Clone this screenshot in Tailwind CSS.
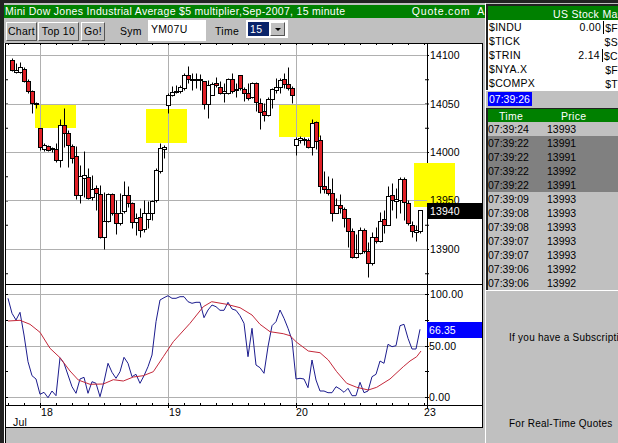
<!DOCTYPE html>
<html lang="en">
<head>
  <meta charset="UTF-8" />
  <title>Mini Dow Jones Chart</title>
  <script src="https://cdn.jsdelivr.net/npm/@tailwindcss/browser@4"></script>
</head>
<body class="w-[618px] h-[443px] overflow-hidden bg-[#c0c0c0] text-black font-['Liberation_Sans',sans-serif] text-[10.5px] leading-none tracking-[0.3px]">
<div class="flex h-[443px] border-t-[3px] border-[#222]">

  <!-- Left: chart window -->
  <div class="w-[485px] shrink-0 flex flex-col border-l-4 border-[#222]">
    <div class="h-[13px] mt-[2px] flex justify-between items-center bg-[#008000] text-white whitespace-nowrap overflow-hidden pl-[1px]">
      <span>Mini Dow Jones Industrial Average $5 multiplier,Sep-2007, 15 minute</span>
      <span class="tracking-[0.8px]">Quote.com&nbsp; A</span>
    </div>

    <!-- Toolbar -->
    <div class="h-[25px] flex items-start pl-[2px]">
      <button class="mt-[4px] w-[31px] h-[19px] bg-[#c0c0c0] border border-t-white border-l-white border-r-[#555] border-b-[#555]">Chart</button>
      <button class="mt-[4px] ml-[1px] w-[41px] h-[19px] bg-[#c0c0c0] border border-t-white border-l-white border-r-[#555] border-b-[#555]">Top 10</button>
      <button class="mt-[4px] ml-[2px] w-[24px] h-[19px] bg-[#c0c0c0] border border-t-white border-l-white border-r-[#555] border-b-[#555]">Go!</button>
      <span class="mt-[8px] ml-[15px] w-[28px]">Sym</span>
      <div class="mt-[2px] w-[58px] h-[21px] bg-white pl-[3px] pt-[4px]">YM07U</div>
      <span class="mt-[8px] ml-[9px] w-[31px]">Time</span>
      <div class="mt-[2px] w-[42px] h-[18px] bg-white p-[2px] flex">
        <div class="w-[21px] bg-[#0a246a] text-white pl-[2px] pt-[2px]">15</div>
        <div class="ml-[1px] w-[15px] bg-[#c0c0c0] border border-t-white border-l-white border-r-[#555] border-b-[#555] flex items-center justify-center">
          <div class="border-x-[3px] border-t-[3px] border-x-transparent border-t-black"></div>
        </div>
      </div>
    </div>

    <!-- Chart panel -->
    <div class="flex-1 border-l border-white">
      <div class="h-full border-l border-black">
        <div class="w-[477px] h-[385px] flex flex-col bg-white border-r border-b border-black">
          <svg id="priceChart" class="block" width="476" height="242" viewBox="6 43 476 242" font-family="Liberation Sans" font-size="10.5"></svg>
          <svg id="rsiChart" class="block" width="476" height="142" viewBox="6 285 476 142" font-family="Liberation Sans" font-size="10.5"></svg>
        </div>
      </div>
    </div>
  </div>

  <!-- Right: quotes -->
  <div class="flex-1 min-w-0 flex flex-col border-l border-white overflow-hidden whitespace-nowrap">
    <div class="mt-[1px] border-l-2 border-t-2 border-[#222] bg-white">
      <div class="h-[14px] bg-[#008000] text-white pl-[65px] pt-[3px]">US Stock Market</div>
      <div id="quoteList"></div>
    </div>
    <div class="border-t border-white h-[18px] pt-[1px] pl-[2px]">
      <span class="inline-block w-[44px] h-[14px] bg-[#0000ff] text-white pl-[1px] pt-[2px] tracking-normal">07:39:26</span>
    </div>
    <div class="border-l-2 border-[#222]">
      <div class="h-[14px] bg-[#008000] text-white flex pt-[2px] border-t border-[#222]">
        <span class="pl-[11px] w-[73px]">Time</span><span>Price</span>
      </div>
      <div id="tradeRows"></div>
    </div>
    <div class="border-t border-white text-[10px] tracking-[0.25px]">
      <p class="pl-[23px] pt-[42px]">If you have a Subscription</p>
      <p class="pl-[23px] pt-[76px]">For Real-Time Quotes</p>
    </div>
  </div>
</div>

<script>
  const ns = "http://www.w3.org/2000/svg";
  function add(svg, tag, attrs, text) {
    const el = document.createElementNS(ns, tag);
    for (const k in attrs) el.setAttribute(k, attrs[k]);
    if (text) el.textContent = text;
    svg.appendChild(el);
  }
  const GRID = "#b0b0b0", XS = [40.5, 168.5, 296.5];

  // body top, body bottom, wick top, wick bottom, red? (measured at 3x, y = 50 + v/3)
  const candles = [
    [30,60,25,63,1],[60,66,40,68,0],[52,66,35,70,0],[56,92,52,95,1],[94,124,88,128,1],[124,160,120,188,1],[160,163,155,175,0],
    [235,292,233,300,1],[286,296,278,302,0],[289,300,286,303,1],[294,298,290,305,0],[296,330,280,335,1],[226,331,208,350,0],
    [226,248,175,290,1],[250,286,240,352,1],[288,325,282,338,1],[319,436,288,448,1],[378,436,345,458,0],[376,384,303,440,0],
    [382,445,355,448,1],[416,442,375,450,0],[414,430,405,480,1],[433,562,405,565,1],[512,560,425,597,0],[432,512,430,515,0],
    [432,488,430,495,1],[488,518,450,552,1],[488,520,430,525,0],[436,484,392,490,0],[436,458,408,470,1],[460,516,455,535,1],
    [505,515,490,555,0],[502,540,475,560,1],[490,538,450,545,0],[490,508,453,535,0],[452,490,450,510,0],[360,450,355,455,0],
    [294,362,280,368,0],[292,296,285,325,0],[134,164,130,188,0],[126,134,108,138,0],[124,126,105,130,0],[112,124,105,128,0],
    [74,114,70,120,0],[74,86,48,100,1],[88,90,68,120,0],[86,88,68,115,0],[86,88,72,120,0],[94,162,92,178,1],[104,162,90,203,0],
    [102,134,95,135,0],[100,106,82,110,1],[110,128,92,132,1],[124,130,100,155,0],[86,128,85,132,0],[86,124,68,128,1],
    [116,120,100,142,0],[75,115,75,120,1],[118,128,112,152,1],[128,145,100,150,1],[98,142,95,145,0],[100,156,96,182,1],
    [160,185,145,236,1],[184,194,160,212,1],[146,196,142,198,0],[118,148,115,175,0],[112,120,85,128,0],[90,112,85,128,0],
    [88,102,70,115,1],[102,115,52,120,1],[115,136,108,158,1],[268,284,260,315,0],[265,270,258,280,0],[268,270,260,285,0],
    [270,290,265,295,1],[220,290,208,315,0],[216,272,212,298,1],[270,408,255,428,1],[408,416,362,430,1],[418,430,378,435,1],
    [430,490,385,512,1],[465,488,445,490,0],[465,474,433,488,1],[476,504,470,530,1],[505,542,505,590,1],[544,622,535,625,1],
    [610,622,552,625,0],[540,610,532,612,0],[540,602,535,610,1],[603,640,575,682,1],[562,640,545,645,0],[562,574,530,580,1],
    [512,574,485,576,0],[508,526,480,550,1],[438,524,408,525,0],[436,450,400,480,1],[446,452,415,505,0],[386,450,380,490,0],
    [386,456,380,510,1],[458,520,450,525,1],[525,542,512,562,1],[541,545,525,572,0],[480,544,480,550,0]
  ];

  // Price panel
  const price = document.getElementById("priceChart");
  for (let y = 55; y < 285; y += 24.25) {
    add(price, "line", {x1:6, x2:8, y1:y+.5, y2:y+.5, stroke:"#000"});
    add(price, "line", {x1:425, x2:429, y1:y+.5, y2:y+.5, stroke:"#000"});
  }
  [[35,104,41,24],[146,109,41,34],[279,104,41,33],[414,163,41,44]].forEach(b =>
    add(price, "rect", {x:b[0], y:b[1], width:b[2], height:b[3], fill:"#ffff00"}));
  [55,104,152,200,249].forEach(y => add(price, "line", {x1:6, x2:427, y1:y+.5, y2:y+.5, stroke:GRID}));
  XS.forEach(x => add(price, "line", {x1:x, x2:x, y1:43, y2:285, stroke:GRID}));
  for (let x = 8; x < 427; x += 16) add(price, "line", {x1:x+.5, x2:x+.5, y1:43, y2:45, stroke:"#000"});
  candles.forEach((c, i) => {
    const x = 12.5 + i * 4, y = v => Math.round(50 + v / 3) + .5;
    add(price, "line", {x1:x, x2:x, y1:y(c[2]), y2:y(c[3]), stroke:"#000"});
    add(price, "rect", {x:x-2, y:y(c[0]), width:4, height:Math.max(1, y(c[1])-y(c[0])), fill:c[4] ? "#e01f26" : "#fff", stroke:"#000"});
  });
  add(price, "line", {x1:427.5, x2:427.5, y1:43, y2:163, stroke:"#000"});
  add(price, "line", {x1:427.5, x2:427.5, y1:207, y2:285, stroke:"#000"});
  [["14100",59],["14050",108],["14000",156],["13950",204],["13900",253]].forEach(l =>
    add(price, "text", {x:430, y:l[1], fill:"#000", "letter-spacing":".1"}, l[0]));
  add(price, "rect", {x:427, y:203, width:55, height:16, fill:"#000"});
  add(price, "text", {x:430, y:215, fill:"#fff", "letter-spacing":".1"}, "13940");
  add(price, "rect", {x:6, y:43, width:476, height:1, fill:"#000"});
  add(price, "rect", {x:6, y:284, width:476, height:1, fill:"#000"});

  // RSI panel: points measured at 3x, x = v/3, y = 285 + v/3
  const blue = [24,40,36,85,48,105,60,82,72,150,84,230,96,272,108,282,120,328,132,322,144,338,156,318,168,332,180,218,192,235,204,270,216,305,228,325,240,282,252,277,264,325,276,290,288,295,300,335,312,290,324,235,336,262,348,280,360,260,372,217,384,235,396,275,408,268,420,295,432,272,444,245,456,210,468,110,480,45,492,38,504,32,516,40,528,40,540,35,552,35,564,50,576,55,588,52,600,52,612,98,624,75,636,60,648,65,660,76,672,76,684,52,696,72,708,76,720,92,732,115,744,215,756,130,768,240,780,248,792,265,804,185,816,122,828,110,840,75,852,100,864,130,876,165,888,282,900,280,912,282,924,308,936,225,948,285,960,318,972,318,984,323,996,323,1008,305,1020,312,1032,322,1044,310,1056,332,1068,332,1080,292,1092,323,1104,318,1116,275,1128,268,1140,228,1152,235,1164,178,1176,185,1188,182,1200,122,1212,118,1224,160,1236,192,1248,192,1260,133];
  const red = [24,108,60,106,90,118,120,142,150,190,180,218,210,258,235,285,270,298,310,297,340,284,370,288,400,276,430,272,460,260,490,215,520,170,570,115,610,65,635,50,680,58,720,68,756,90,780,118,810,140,850,146,870,152,890,172,925,198,960,203,985,225,1010,260,1040,295,1070,307,1105,315,1130,307,1170,282,1210,245,1230,228,1250,215,1263,198];
  const pts = a => { let s = ""; for (let i = 0; i < a.length; i += 2) s += (a[i]/3).toFixed(1) + "," + (285 + a[i+1]/3).toFixed(1) + " "; return s; };

  const rsi = document.getElementById("rsiChart");
  [294,346,397].forEach(y => add(rsi, "line", {x1:6, x2:427, y1:y+.5, y2:y+.5, stroke:GRID}));
  XS.forEach(x => add(rsi, "line", {x1:x, x2:x, y1:285, y2:405, stroke:GRID}));
  [294,320,346,371,397].forEach(y => {
    add(rsi, "line", {x1:6, x2:8, y1:y+.5, y2:y+.5, stroke:"#000"});
    add(rsi, "line", {x1:425, x2:429, y1:y+.5, y2:y+.5, stroke:"#000"});
  });
  for (let x = 8; x < 427; x += 16) add(rsi, "line", {x1:x+.5, x2:x+.5, y1:403, y2:405, stroke:"#000"});
  XS.forEach(x => add(rsi, "line", {x1:x, x2:x, y1:403, y2:408, stroke:"#000"}));
  add(rsi, "polyline", {points:pts(blue), fill:"none", stroke:"#1c1c8e", "stroke-width":1});
  add(rsi, "polyline", {points:pts(red), fill:"none", stroke:"#c4283a", "stroke-width":1});
  add(rsi, "line", {x1:427.5, x2:427.5, y1:285, y2:409, stroke:"#000"});
  add(rsi, "line", {x1:6, x2:482, y1:405.5, y2:405.5, stroke:"#000"});
  add(rsi, "rect", {x:427, y:322, width:55, height:16, fill:"#0000ff"});
  add(rsi, "text", {x:429, y:334, fill:"#fff", "letter-spacing":".1"}, "66.35");
  [["100.00",430,298],["50.00",429,350],["0.00",429,401],["18",41,416],["19",169,416],["20",296,416],["23",424,416],["Jul",13,426]].forEach(l =>
    add(rsi, "text", {x:l[1], y:l[2], fill:"#000", "letter-spacing":".2"}, l[0]));

  // Right column
  const quotes = [["$INDU","0.00","$F",1],["$TICK","","$S",0],["$TRIN","2.14","$C",1],["$NYA.X","","$F",0],["$COMPX","","$T",0]];
  document.getElementById("quoteList").innerHTML = quotes.map(q => `
    <div class="h-[14px] flex items-center pl-[1px]">
      <span class="w-[90px]">${q[0]}</span>
      <span class="w-[27px] text-right">${q[1]}</span>
      <span class="ml-[2px] h-[13px] border-l border-black pl-[1px] pt-[2px] ${q[3] ? "" : "border-l-white"}">${q[2]}</span>
    </div>`).join("");

  const trades = [["07:39:24","13993",0],["07:39:22","13991",1],["07:39:22","13991",1],["07:39:22","13992",1],["07:39:22","13991",1],
    ["07:39:09","13993",0],["07:39:08","13993",0],["07:39:08","13993",0],["07:39:07","13993",0],["07:39:07","13993",0],["07:39:06","13992",0],["07:39:06","13992",0]];
  document.getElementById("tradeRows").innerHTML = trades.map(t => `
    <div class="h-[14px] flex items-center tracking-normal ${t[2] ? "bg-[#808080]" : "bg-[#c0c0c0]"}">
      <span class="w-[59px]">${t[0]}</span><span>${t[1]}</span>
    </div>`).join("");
</script>
</body>
</html>
